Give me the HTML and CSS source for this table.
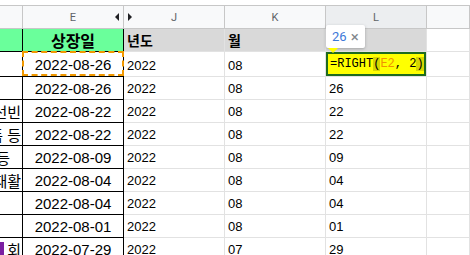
FILE: index.html
```html
<!DOCTYPE html>
<html lang="ko">
<head>
<meta charset="UTF-8" />
<meta name="viewport" content="width=device-width, initial-scale=1" />
<title>상장일 시트</title>
<link rel="stylesheet" href="styles.css">
</head>
<body>

<div class="sheet">
  <div class="strip"></div>

  <!-- column letters -->
  <div class="col-head"></div>
  <div class="col-head split"><span></span><span>E</span><span class="arrow-left"></span></div>
  <div class="col-head split"><span class="arrow-right"></span><span>J</span><span></span></div>
  <div class="col-head">K</div>
  <div class="col-head active">L</div>
  <div class="col-head"></div>

  <!-- header row -->
  <div class="cell green edge"></div>
  <div class="cell green edge title">상장일</div>
  <div class="cell gray label">년도</div>
  <div class="cell gray label">월</div>
  <div class="cell gray"></div>
  <div class="cell"></div>

  <div class="cell edge clip"></div>
  <div class="cell edge date copied">2022-08-26</div>
  <div class="cell">2022</div>
  <div class="cell">08</div>
  <div class="cell editing">
    <div class="preview">26 <span class="close">×</span></div>
    <span class="formula">=RIGHT<span class="paren">(</span><span class="ref">E2</span>, 2<span class="paren">)</span></span>
  </div>
  <div class="cell"></div>

  <div class="cell edge clip"></div>
  <div class="cell edge date">2022-08-26</div>
  <div class="cell">2022</div>
  <div class="cell">08</div>
  <div class="cell">26</div>
  <div class="cell"></div>

  <div class="cell edge clip">선빈</div>
  <div class="cell edge date">2022-08-22</div>
  <div class="cell">2022</div>
  <div class="cell">08</div>
  <div class="cell">22</div>
  <div class="cell"></div>

  <div class="cell edge clip">폼 등</div>
  <div class="cell edge date">2022-08-22</div>
  <div class="cell">2022</div>
  <div class="cell">08</div>
  <div class="cell">22</div>
  <div class="cell"></div>

  <div class="cell edge clip loose">등</div>
  <div class="cell edge date">2022-08-09</div>
  <div class="cell">2022</div>
  <div class="cell">08</div>
  <div class="cell">09</div>
  <div class="cell"></div>

  <div class="cell edge clip">재활</div>
  <div class="cell edge date">2022-08-04</div>
  <div class="cell">2022</div>
  <div class="cell">08</div>
  <div class="cell">04</div>
  <div class="cell"></div>

  <div class="cell edge clip"></div>
  <div class="cell edge date">2022-08-04</div>
  <div class="cell">2022</div>
  <div class="cell">08</div>
  <div class="cell">04</div>
  <div class="cell"></div>

  <div class="cell edge clip"></div>
  <div class="cell edge date">2022-08-01</div>
  <div class="cell">2022</div>
  <div class="cell">08</div>
  <div class="cell">01</div>
  <div class="cell"></div>

  <div class="cell edge clip tail"><span class="mark"></span>회</div>
  <div class="cell edge date">2022-07-29</div>
  <div class="cell">2022</div>
  <div class="cell">07</div>
  <div class="cell">29</div>
  <div class="cell"></div>
</div>

</body>
</html>
```

FILE: styles.css
```css
body {
  margin: 0;
  background: #fff;
  overflow: hidden;
  font-family: "Liberation Sans", Arial, "Noto Sans CJK KR", sans-serif;
}

.sheet {
  display: grid;
  grid-template-columns: 23px 101px 101px 101px 101px 1fr;
  grid-template-rows: 6px 23px 23px 25px repeat(8, 23px);
  width: 470px;
}

.strip {
  grid-column: 1 / -1;
  border-bottom: 1px solid #c7c7c7;
  background: #fff;
}

.col-head {
  display: flex;
  align-items: center;
  justify-content: center;
  background: #f8f9fa;
  border-right: 1px solid #c7c7c7;
  border-bottom: 1px solid #c7c7c7;
  color: #5f6368;
  font-family: Roboto, "Liberation Sans", sans-serif;
  font-size: 11px;
}
.col-head.active {
  background: #eceef0;
}
.col-head.split {
  display: grid;
  grid-template-columns: 1fr auto 1fr;
  align-items: center;
}
.arrow-left,
.arrow-right {
  width: 0;
  height: 0;
  border-top: 4px solid transparent;
  border-bottom: 4px solid transparent;
}
.arrow-left {
  justify-self: end;
  margin-right: 4px;
  border-right: 4px solid #202124;
}
.arrow-right {
  justify-self: start;
  margin-left: 4px;
  border-left: 4px solid #202124;
}

.cell {
  position: relative;
  display: flex;
  align-items: flex-end;
  padding: 0 3px 3px;
  border-right: 1px solid #e2e2e2;
  border-bottom: 1px solid #e2e2e2;
  font-size: 13px;
  color: #000;
  white-space: nowrap;
  overflow: hidden;
}
.cell.edge {
  border-right-color: #000;
  border-bottom-color: #000;
}

.green {
  background: #6aff9b;
}
.gray {
  background: #d9d9d9;
}
.title {
  justify-content: center;
  align-items: center;
  padding: 0;
  font-family: "Noto Sans CJK KR", sans-serif;
  font-weight: 700;
  font-size: 16px;
}
.label {
  align-items: center;
  padding-bottom: 0;
  font-family: "Noto Sans CJK KR", sans-serif;
  font-weight: 700;
  font-size: 14px;
}

.date {
  justify-content: center;
  align-items: center;
  padding: 0;
  font-size: 15px;
}

/* text spilling in from the column on the left */
.clip {
  justify-content: flex-end;
  align-items: center;
  padding: 0 1px 0 0;
  font-family: "Noto Sans CJK KR", sans-serif;
  font-size: 15px;
}
.clip.loose {
  padding-right: 12px;
}
.clip.tail {
  padding-right: 1px;
}
.mark {
  flex: none;
  width: 8px;
  height: 14px;
  margin-right: 3px;
  background: #7b1fa2;
}

/* marching-ants box around the copied cell */
.copied {
  overflow: visible;
}
.copied::after {
  content: "";
  position: absolute;
  left: -1px;
  top: -1px;
  right: -1px;
  bottom: 0;
  border: 2px dashed #f29900;
}

/* cell in edit mode */
.editing {
  overflow: visible;
  background: #ffff00;
  box-shadow: inset 0 0 0 2px #1e6b1e;
  align-items: center;
  padding: 0 4px;
}
.formula {
  font-family: "Liberation Mono", "DejaVu Sans Mono", monospace;
  font-size: 12px;
  color: #000;
}
.formula .paren {
  background: #d6d600;
}
.formula .ref {
  color: #f09300;
}

.preview {
  position: absolute;
  left: 0;
  top: -27px;
  height: 23px;
  padding: 0 6px;
  display: flex;
  align-items: center;
  gap: 4px;
  background: #fff;
  border-radius: 2px;
  box-shadow: 0 1px 3px rgba(60, 64, 67, 0.35);
  font-family: Roboto, "Liberation Sans", sans-serif;
  font-size: 13px;
  color: #3c78d8;
}
.preview::after {
  content: "";
  position: absolute;
  left: 2px;
  bottom: -5px;
  border-left: 5px solid transparent;
  border-right: 5px solid transparent;
  border-top: 5px solid #ffff00;
}
.close {
  color: #80868b;
  font-size: 15px;
}
```
